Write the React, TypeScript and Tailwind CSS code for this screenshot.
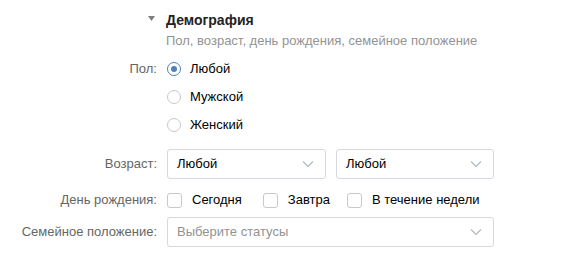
import React from "react";

function Chevron() {
  return (
    <svg width="12" height="8" viewBox="0 0 12 8" className="shrink-0">
      <path d="M1 1.5 L6 6.5 L11 1.5" fill="none" stroke="#aeb7c2" strokeWidth="1.2" />
    </svg>
  );
}

function Select({ value, placeholder, className }: { value?: string; placeholder?: string; className?: string }) {
  return (
    <div
      className={`flex items-center justify-between h-[30px] border border-[#d3d9de] rounded-[3px] bg-white pl-[9px] pr-[11px] ${className ?? ""}`}
    >
      <span className={value ? "text-black" : "text-[#929292]"}>{value ?? placeholder}</span>
      <Chevron />
    </div>
  );
}

function Radio({ checked, label }: { checked?: boolean; label: string }) {
  return (
    <div className="flex items-center h-[28px]">
      <div
        className={`w-[14px] h-[14px] rounded-full border flex items-center justify-center ${
          checked ? "border-[#5181b8]" : "border-[#c1c9d1]"
        }`}
      >
        {checked && <div className="w-[6px] h-[6px] rounded-full bg-[#5181b8]" />}
      </div>
      <span className="ml-[9px] text-black">{label}</span>
    </div>
  );
}

function Checkbox({ label, className }: { label: string; className?: string }) {
  return (
    <div className={`flex items-center ${className ?? ""}`}>
      <div className="w-[15px] h-[15px] rounded-[3px] border border-[#c1c9d1] bg-white" />
      <span className="ml-[10px] text-black">{label}</span>
    </div>
  );
}

function Label({ children }: { children: React.ReactNode }) {
  return <div className="w-[157px] shrink-0 text-right text-[#656565]">{children}</div>;
}

export default function App() {
  return (
    <div
      className="w-[586px] h-[262px] bg-white text-[13px] leading-[18px] overflow-hidden"
      style={{ fontFamily: '"Liberation Sans", Arial, sans-serif' }}
    >
      <div className="pt-[11px] pl-[148px]">
        <div className="flex items-center">
          <svg width="18" height="18" viewBox="0 0 18 18" className="shrink-0">
            <polygon points="0,5 7,5 3.5,10" fill="#7f7f7f" />
          </svg>
          <span className="font-bold text-[14px] text-[#222]">Демография</span>
        </div>
        <div className="mt-[3px] pl-[18px] text-[#939393]">Пол, возраст, день рождения, семейное положение</div>
      </div>

      <div className="mt-[5px] flex">
        <Label>
          <div className="h-[28px] flex items-center justify-end">Пол:</div>
        </Label>
        <div className="ml-[10px] flex flex-col">
          <Radio checked label="Любой" />
          <Radio label="Мужской" />
          <Radio label="Женский" />
        </div>
      </div>

      <div className="mt-[10px] flex items-center">
        <Label>Возраст:</Label>
        <div className="ml-[10px] flex gap-[10px]">
          <Select value="Любой" className="w-[159px]" />
          <Select value="Любой" className="w-[158px]" />
        </div>
      </div>

      <div className="mt-[7px] h-[28px] flex items-center">
        <Label>День рождения:</Label>
        <div className="ml-[10px] flex items-center">
          <Checkbox label="Сегодня" />
          <Checkbox label="Завтра" className="ml-[21px]" />
          <Checkbox label="В течение недели" className="ml-[17px]" />
        </div>
      </div>

      <div className="mt-[3px] flex items-center">
        <Label>Семейное положение:</Label>
        <div className="ml-[10px]">
          <Select placeholder="Выберите статусы" className="w-[327px]" />
        </div>
      </div>
    </div>
  );
}
